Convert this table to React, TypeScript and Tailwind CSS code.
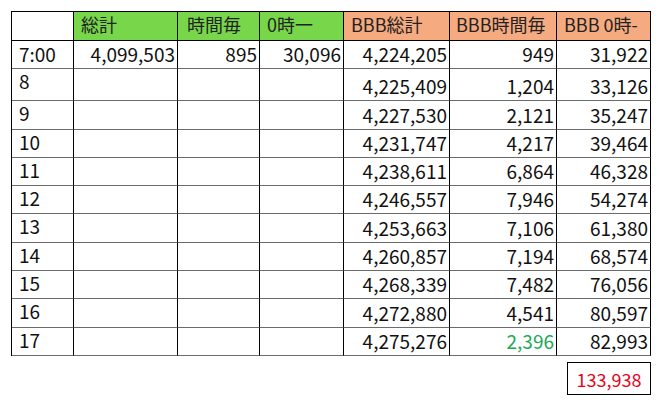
import React from "react";

const rows: { label: string; a?: string; b?: string; c?: string; d: string; e: string; f: string; h: number; green?: boolean }[] = [
  { label: "7:00", a: "4,099,503", b: "895", c: "30,096", d: "4,224,205", e: "949", f: "31,922", h: 28 },
  { label: "8", d: "4,225,409", e: "1,204", f: "33,126", h: 32 },
  { label: "9", d: "4,227,530", e: "2,121", f: "35,247", h: 29 },
  { label: "10", d: "4,231,747", e: "4,217", f: "39,464", h: 28 },
  { label: "11", d: "4,238,611", e: "6,864", f: "46,328", h: 28 },
  { label: "12", d: "4,246,557", e: "7,946", f: "54,274", h: 28 },
  { label: "13", d: "4,253,663", e: "7,106", f: "61,380", h: 29 },
  { label: "14", d: "4,260,857", e: "7,194", f: "68,574", h: 28 },
  { label: "15", d: "4,268,339", e: "7,482", f: "76,056", h: 28 },
  { label: "16", d: "4,272,880", e: "4,541", f: "80,597", h: 29 },
  { label: "17", d: "4,275,276", e: "2,396", f: "82,993", h: 28, green: true },
];

function Num({ v, green, h }: { v?: string; green?: boolean; h: number }) {
  return (
    <div
      className={
        "flex items-end justify-end border-r border-b border-r-black border-b-[#6b6b6b] pr-[2px] pb-[2px] text-[19px] leading-[24px] " +
        (green ? "text-[#22a855]" : "text-[#111]")
      }
      style={{ height: h }}
    >
      {v ?? ""}
    </div>
  );
}

export default function App() {
  const font = { fontFamily: '"Noto Sans CJK JP", "Noto Sans", sans-serif' };
  return (
    <div className="w-[662px] h-[410px] bg-white pl-[11px] pt-[11px]" style={font}>
      <div className="w-[640px] border-l border-t border-black grid grid-cols-[62px_104px_82px_84px_106px_107px_94px]">
        {/* header */}
        <div className="h-[29px] border-r border-b border-black bg-white" />
        <div className="h-[29px] border-r border-b border-black bg-[#78d64b] pl-[7px] text-[18px] leading-[24px] text-[#222]">総計</div>
        <div className="h-[29px] border-r border-b border-black bg-[#78d64b] pl-[9px] text-[18px] leading-[24px] text-[#222]">時間毎</div>
        <div className="h-[29px] border-r border-b border-black bg-[#78d64b] pl-[7px] text-[18px] leading-[24px] text-[#222]">0時一</div>
        <div className="h-[29px] border-r border-b border-black bg-[#f6aa80] pl-[7px] text-[18px] leading-[24px] text-[#222]">BBB総計</div>
        <div className="h-[29px] border-r border-b border-black bg-[#f6aa80] pl-[6px] text-[18px] leading-[24px] text-[#222]">BBB時間毎</div>
        <div className="h-[29px] border-r border-b border-black bg-[#f6aa80] pl-[7px] text-[18px] leading-[24px] text-[#222]">BBB 0時-</div>
        {rows.map((r, i) => (
          <React.Fragment key={r.label}>
            {i === 0 ? (
              <div
                className="flex items-end border-r border-b border-r-black border-b-[#6b6b6b] pl-[7px] pb-[2px] text-[19px] leading-[24px] text-[#111]"
                style={{ height: r.h }}
              >
                {r.label}
              </div>
            ) : (
              <div
                className="border-r border-b border-r-black border-b-[#6b6b6b] pl-[7px] pt-[3px] text-[19px] leading-[18px] text-[#111]"
                style={{ height: r.h }}
              >
                {r.label}
              </div>
            )}
            <Num v={r.a} h={r.h} />
            <Num v={r.b} h={r.h} />
            <Num v={r.c} h={r.h} />
            <Num v={r.d} h={r.h} />
            <Num v={r.e} h={r.h} green={r.green} />
            <Num v={r.f} h={r.h} />
          </React.Fragment>
        ))}
      </div>
      <div className="w-[640px] flex justify-end mt-[6px]">
        <div className="w-[84px] h-[33px] border border-black flex items-center justify-center text-[18px] text-[#e8001a] leading-none">
          133,938
        </div>
      </div>
    </div>
  );
}
